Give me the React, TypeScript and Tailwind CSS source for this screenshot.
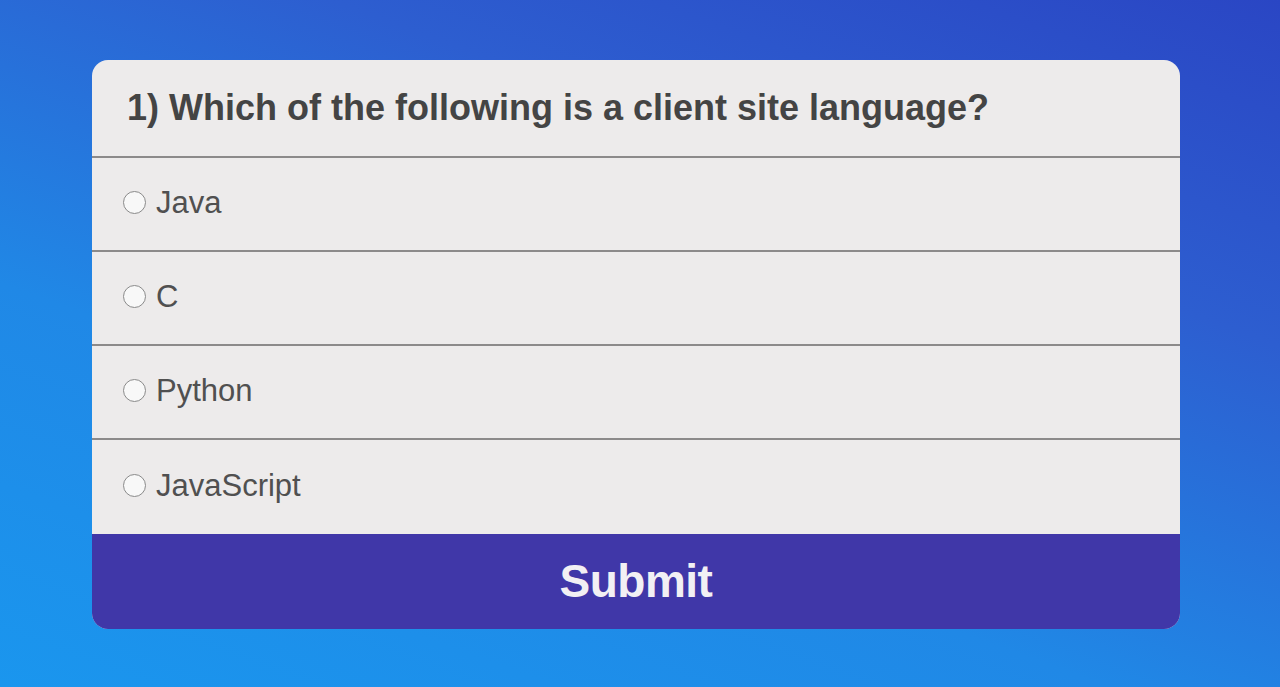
import React from "react";

const options = ["Java", "C", "Python", "JavaScript"];

export default function App() {
  return (
    <div
      className="w-[1280px] h-[687px] overflow-hidden bg-[linear-gradient(200deg,#2a46c4_0%,#2d5ed0_30%,#2088e6_65%,#1a96ee_100%)] pt-[60px]"
      style={{ fontFamily: '"Liberation Sans", Arial, sans-serif' }}
    >
      <div className="ml-[92px] w-[1088px] rounded-[16px] overflow-hidden bg-[#edebeb] flex flex-col">
        <div className="h-[98px] flex items-center pl-[35px] border-b-2 border-[#8c8a8a]">
          <h1 className="text-[36px] font-bold text-[#444444] leading-none">
            1) Which of the following is a client site language?
          </h1>
        </div>
        {options.map((o, i) => (
          <label
            key={o}
            className={`h-[94px] flex items-center pl-[31px] pb-[4px] gap-[10px] ${i < options.length - 1 ? "border-b-2 border-[#8c8a8a]" : ""}`}
          >
            <span className="w-[23px] h-[23px] rounded-full border-[1.5px] border-[#8a8a8a] bg-[#f8f8f8] shrink-0" />
            <span className="text-[31px] text-[#505050] leading-none">{o}</span>
          </label>
        ))}
        <button className="h-[95px] bg-[#4037a8] flex items-center justify-center text-[46px] font-bold text-[#f2f0f4] tracking-[-0.5px]">
          Submit
        </button>
      </div>
    </div>
  );
}
